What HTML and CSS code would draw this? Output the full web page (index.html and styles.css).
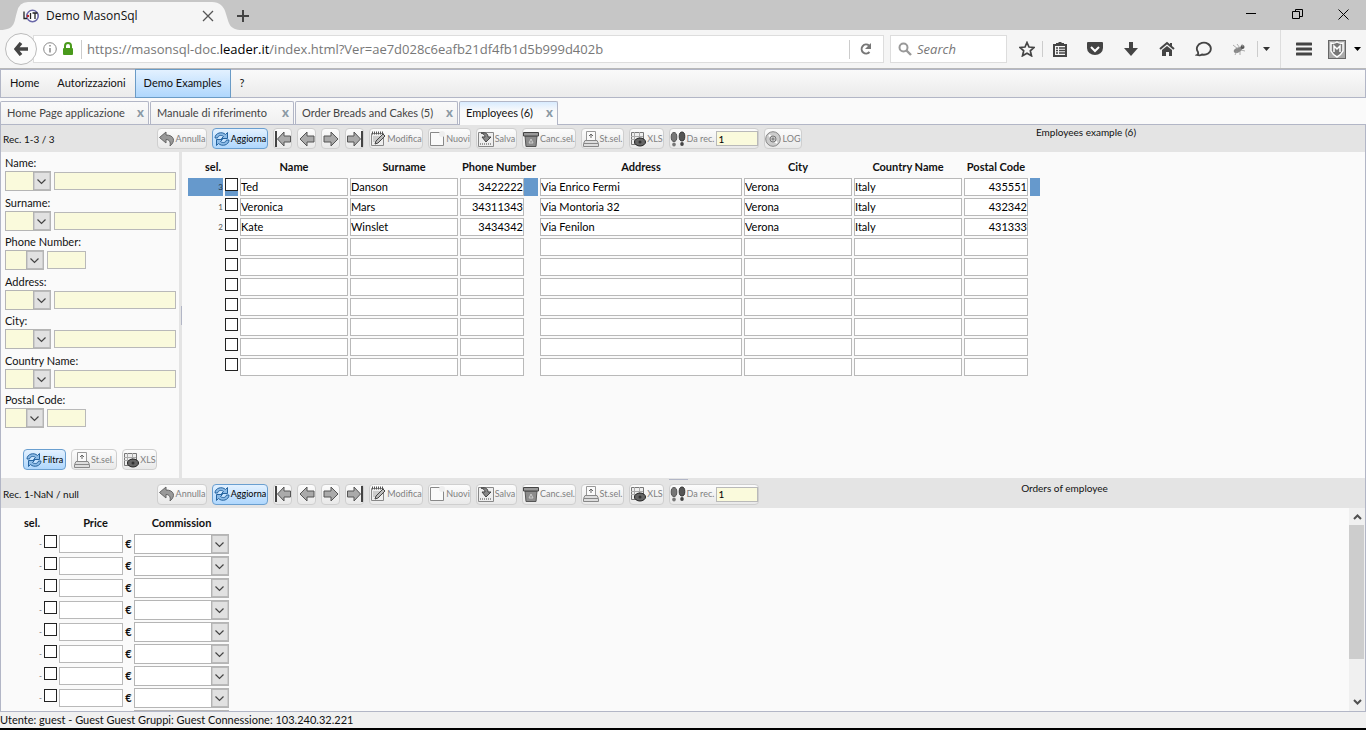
FILE: index.html
```
<!DOCTYPE html>
<html lang="it">
<head>
<meta charset="utf-8">
<title>Demo MasonSql</title>
<link rel="stylesheet" href="styles.css">
</head>
<body>
<svg class="defs" aria-hidden="true">
  <symbol id="undo" viewBox="0 0 16 16"><path d="M7 1 .5 6.500 7 12V8.500c3 0 5 2 4 6.500 6-5 4-11-4-11z" fill="#999" stroke="#666"/></symbol>
  <symbol id="refresh" viewBox="0 0 16 16"><path d="M1 7c0-5 7-7 10.500-3.500L13.500 1.500v6h-6l2-2C7 3.500 4 4.500 3.500 7z" fill="#8dbbe6" stroke="#25639f"/><path d="M15 9c0 5-7 7-10.500 3.500L2.500 14.500v-6h6l-2 2c2.500 2 5.500 1 6-1.500z" fill="#8dbbe6" stroke="#25639f"/></symbol>
  <symbol id="left" viewBox="0 0 16 16"><path d="M1 8 8 1v4h7v6H8v4z" fill="#aaa" stroke="#555"/></symbol>
  <symbol id="right" viewBox="0 0 16 16"><path d="M15 8 8 1v4H1v6h7v4z" fill="#aaa" stroke="#555"/></symbol>
  <symbol id="first" viewBox="0 0 16 16"><path d="M2.500 8 9 1v4h6.500v6H9v4z" fill="#aaa" stroke="#555"/><path d="M1 0v16" stroke="#444" stroke-width="2"/></symbol>
  <symbol id="last" viewBox="0 0 16 16"><path d="M13.500 8 7 1v4H.5v6H7v4z" fill="#aaa" stroke="#555"/><path d="M15 0v16" stroke="#444" stroke-width="2"/></symbol>
  <symbol id="edit" viewBox="0 0 16 16"><path d="M1.500 2.500h12v12h-12z" fill="#eee" stroke="#888"/><path d="M2 2h11" stroke="#555" stroke-width="3" stroke-dasharray="1 1"/><path d="M3 6h7M3 8h6M3 10h4" stroke="#aaa"/><path d="m5 13 1-3 7-7 2 2-7 7z" fill="#bbb" stroke="#444"/></symbol>
  <symbol id="new" viewBox="0 0 16 16"><path d="M1.500 1.500h13v13h-13z" fill="#fafafa" stroke="#888"/><circle cx="13" cy="3" r="3" fill="#eee"/></symbol>
  <symbol id="save" viewBox="0 0 16 16"><path d="M.5 1.500h15v14H.5z" fill="#eee" stroke="#888"/><path d="M2 13h12" stroke="#999" stroke-width="2" stroke-dasharray="1 1"/><path d="M3 2c5-1 7 1 7 4h3l-5 5-4-5h3c0-2-1-3-4-4z" fill="#888" stroke="#444"/></symbol>
  <symbol id="trash" viewBox="0 0 16 16"><path d="M2 5h12l-1 10.500H3z" fill="#8c8c8c" stroke="#555"/><path d="M.5 1.500h15V5H.5z" fill="#999" stroke="#444"/><path d="m6 12 2-4 2 4z" fill="none" stroke="#ccc"/></symbol>
  <symbol id="print" viewBox="0 0 16 16"><path d="M3.500 10V.5h9V10" fill="#fafafa" stroke="#999"/><path d="M8 7V3M6 5l2-2 2 2" fill="none" stroke="#666"/><path d="M2 9.500h12l1.500 3v3H.5v-3z" fill="#ddd" stroke="#888"/><path d="M1 12.500h14" stroke="#888"/></symbol>
  <symbol id="xls" viewBox="0 0 16 16"><path d="M1.500 1.500h12v12h-12z" fill="#eee" stroke="#777"/><path d="M4.500 1v12M9.500 1v9M1 5.500h12M1 8.500h12" stroke="#aaa"/><ellipse cx="10" cy="11" rx="5.500" ry="4" fill="#666" stroke="#222"/><circle cx="10" cy="11" r="1.500" fill="#333"/></symbol>
  <symbol id="steps" viewBox="0 0 16 16"><ellipse cx="4" cy="6" rx="2.800" ry="4.500" fill="#777" stroke="#555"/><ellipse cx="4" cy="13.500" rx="1.800" ry="2" fill="#777"/><ellipse cx="12" cy="5.500" rx="2.800" ry="4.500" fill="#555" stroke="#333"/><ellipse cx="12" cy="13" rx="1.800" ry="2" fill="#444"/></symbol>
  <symbol id="disc" viewBox="0 0 16 16"><circle cx="8" cy="8" r="7.300" fill="#ccc" stroke="#888"/><path d="m4 4 8 8" stroke="#fff" stroke-width="2"/><circle cx="8" cy="8" r="3" fill="#ccc" stroke="#777"/><circle cx="8" cy="8" r="1" fill="#fff" stroke="#666"/></symbol>
</svg>

<header class="browser">
  <div class="titlebar">
    <svg class="tab-shape" viewBox="0 0 242 28" preserveAspectRatio="none"><path d="M0 28C16 28 14 19 17 10Q19 0 28 0H212Q223 0 226 12C229 21 229 28 242 28z" fill="#f5f5f5"/></svg>
    <div class="browser-tab">
      <svg class="favicon" width="16" height="16" viewBox="0 0 16 16"><circle cx="9.500" cy="8" r="5.700" fill="#fff" stroke="#6a68a8" stroke-width="1.600"/><path d="M1 3.500v7h3M7.500 5v6M9.500 5h5M12 5v6" fill="none" stroke="#222" stroke-width="1.300"/><circle cx="5" cy="8" r="1.200" fill="#b22"/></svg>
      <span class="tab-title">Demo MasonSql</span>
      <button class="plain" aria-label="Chiudi scheda"><svg width="12" height="12" viewBox="0 0 12 12"><path d="m1 1 10 10M11 1 1 11" stroke="#555" stroke-width="1.300"/></svg></button>
    </div>
    <button class="plain new-tab" aria-label="Nuova scheda"><svg width="12" height="12" viewBox="0 0 12 12"><path d="M6 0v12M0 6h12" stroke="#444" stroke-width="2"/></svg></button>
    <div class="window-buttons">
      <button class="plain" aria-label="Riduci"><svg width="11" height="11" viewBox="0 0 11 11"><path d="M0 4.500h10" stroke="#000"/></svg></button>
      <button class="plain" aria-label="Ripristina"><svg width="11" height="11" viewBox="0 0 11 11"><path d="M.5 2.500h7v7h-7zM3.500 2V.5h7v7H8" fill="none" stroke="#000"/></svg></button>
      <button class="plain" aria-label="Chiudi"><svg width="11" height="11" viewBox="0 0 11 11"><path d="m.5.5 10 10M10.500.5l-10 10" stroke="#000"/></svg></button>
    </div>
  </div>
  <div class="navbar">
    <button class="plain back" aria-label="Indietro"><svg width="14" height="14" viewBox="0 0 14 14"><path d="M7 1 2 7l5 6M2 7h12" fill="none" stroke="#444" stroke-width="3.400"/></svg></button>
    <div class="urlbar">
      <svg width="14" height="14" viewBox="0 0 14 14"><circle cx="7" cy="7" r="6.300" fill="none" stroke="#888"/><path d="M7 6v4.500M7 3v1.500" stroke="#888" stroke-width="1.500"/></svg>
      <svg width="12" height="14" viewBox="0 0 12 14"><path d="M3 7V4a3 3 0 0 1 6 0v3" fill="none" stroke="#4a9a1c" stroke-width="2"/><rect x="1" y="6" width="10" height="7" rx="1" fill="#4a9a1c"/></svg>
      <span class="rule"></span>
      <span class="url">https://masonsql-doc.<b>leader.it</b>/index.html?Ver=ae7d028c6eafb21df4fb1d5b999d402b</span>
      <span class="rule"></span>
      <button class="plain reload" aria-label="Ricarica"><svg width="12" height="12" viewBox="0 0 12 12"><path d="M9.500 9A4.500 4.500 0 1 1 9 2.500" fill="none" stroke="#777" stroke-width="2"/><path d="M11 0v6H5z" fill="#777"/></svg></button>
    </div>
    <div class="searchbox">
      <svg width="14" height="14" viewBox="0 0 14 14"><circle cx="5.500" cy="5.500" r="4" fill="none" stroke="#999" stroke-width="2"/><path d="m8.500 8.500 4.500 4.500" stroke="#999" stroke-width="2.400"/></svg>
      <input type="text" placeholder="Search" aria-label="Search">
    </div>
    <div class="nav-icons">
      <button class="plain star" aria-label="Segnalibro"><svg width="16" height="16" viewBox="0 0 16 16"><path d="m8 1.500 2 4.500 5 .5-3.700 3.300 1.200 5L8 12.200l-4.500 2.600 1.200-5L1 6.500 6 6z" fill="none" stroke="#444" stroke-width="1.700"/></svg></button>
      <button class="plain list" aria-label="Elenco"><svg width="14" height="16" viewBox="0 0 14 16"><path d="M1 4h12v11H1z" fill="#f5f5f5" stroke="#444" stroke-width="2"/><path d="M3 4V2h2l1-1h2l1 1h2v2z" fill="#444"/><path d="M3 7h2M6 7h6M3 9.500h2M6 9.500h6M3 12h2M6 12h6" stroke="#444" stroke-width="1.300"/></svg></button>
      <button class="plain" aria-label="Pocket"><svg width="16" height="16" viewBox="0 0 16 16"><path d="M1 1h14q1 0 1 1v5a8 7 0 0 1-16 0V2q0-1 1-1z" fill="#444"/><path d="m4 6 4 4 4-4" fill="none" stroke="#fff" stroke-width="2"/></svg></button>
      <button class="plain" aria-label="Download"><svg width="14" height="16" viewBox="0 0 14 16"><path d="M5 1h4v6h5l-7 8-7-8h5z" fill="#444"/></svg></button>
      <button class="plain" aria-label="Home"><svg width="16" height="16" viewBox="0 0 16 16"><path d="m1 8 7-6 7 6" fill="none" stroke="#444" stroke-width="2"/><path d="M3 9l5-4 5 4v6h-3v-4H7v4H3zM11 2h2v4h-2z" fill="#444"/></svg></button>
      <button class="plain" aria-label="Chat"><svg width="17" height="16" viewBox="0 0 17 16"><path d="M2 14c2-1 1-2 1-3a7 6 0 1 1 4 2.500c-1 .8-3 1-5 .5z" fill="none" stroke="#444" stroke-width="1.800"/></svg></button>
      <button class="plain" aria-label="Estensione"><svg width="14" height="14" viewBox="0 0 14 14"><ellipse cx="6" cy="8" rx="4.500" ry="2.400" fill="#888" transform="rotate(-25 6 8)"/><circle cx="10.500" cy="5" r="2" fill="#555"/><path d="m1 3 5 4M5 2l3 4M10 2l1 3M3 13l2-4M8 13V9M13 9 9 8" stroke="#999" stroke-width=".8"/></svg></button>
      <button class="plain drop" aria-label="Altro"><svg width="7" height="4" viewBox="0 0 7 4"><path d="M0 0h7L3.500 4z" fill="#333"/></svg></button>
      <button class="plain menu" aria-label="Menu"><svg width="16" height="14" viewBox="0 0 16 14"><path d="M1 2h14M1 7h14M1 12h14" stroke="#444" stroke-width="3" stroke-linecap="round"/></svg></button>
      <button class="plain shield" aria-label="Sicurezza"><svg width="18" height="19" viewBox="0 0 18 19"><rect x=".5" y=".5" width="17" height="18" fill="#aaa" stroke="#666"/><path d="M3 3q3 1 6-1 3 2 6 1v8q-2 4-6 6-4-2-6-6z" fill="#777" stroke="#fff" stroke-width="1.500"/><path d="M6 12V6l3 3 3-3v6" fill="none" stroke="#fff" stroke-width="1.500"/></svg></button>
      <button class="plain last" aria-label="Opzioni"><svg width="7" height="4" viewBox="0 0 7 4"><path d="M0 0h7L3.500 4z" fill="#000"/></svg></button>
    </div>
  </div>
</header>

<nav class="menubar">
  <a href="#">Home</a><a href="#">Autorizzazioni</a><a href="#" class="active">Demo Examples</a><a href="#">?</a>
</nav>
<div class="tabs">
  <div class="tab tab-home"><a href="#">Home Page applicazione</a><button class="plain">x</button></div>
  <div class="tab tab-manual"><a href="#">Manuale di riferimento</a><button class="plain">x</button></div>
  <div class="tab tab-orders"><a href="#">Order Breads and Cakes (5)</a><button class="plain">x</button></div>
  <div class="tab tab-employees active"><a href="#">Employees (6)</a><button class="plain">x</button></div>
</div>

<main class="workspace">
  <div class="toolbar" id="toolbar-top"><span class="record">Rec. 1-3 / 3</span><span class="caption">Employees example (6)</span></div>
  <div class="split">
    <form class="filters">
      <div class="fields" id="fields"></div>
      <div class="filter-buttons">
        <button type="button" class="tool primary w-filter"><svg><use href="#refresh"/></svg>Filtra</button>
        <button type="button" class="tool w-find"><svg><use href="#print"/></svg>St.sel.</button>
        <button type="button" class="tool w-xls"><svg><use href="#xls"/></svg>XLS</button>
      </div>
    </form>
    <div class="splitter"><span></span></div>
    <div class="records">
      <table class="employees">
        <thead><tr><th class="c-num"><span>sel.</span></th><th class="c-check"></th><th class="c-mid">Name</th><th class="c-mid">Surname</th><th class="c-phone">Phone Number</th><th class="c-address">Address</th><th class="c-mid">City</th><th class="c-mid">Country Name</th><th class="c-code">Postal Code</th><th class="c-end"></th></tr></thead>
        <tbody id="employees"></tbody>
      </table>
    </div>
  </div>
  <div class="toolbar second" id="toolbar-bottom"><span class="record">Rec. 1-NaN / null</span><span class="caption">Orders of employee</span></div>
  <div class="orders-pane">
    <table class="orders">
      <thead><tr><th class="o-num"><span>sel.</span></th><th class="c-check"></th><th class="o-price"><span>Price</span></th><th class="o-euro"></th><th class="o-commission">Commission</th></tr></thead>
      <tbody id="orders"></tbody>
    </table>
    <div class="scrollbar">
      <svg width="9" height="6" viewBox="0 0 9 6"><path d="m1 5 3.500-3.500L8 5" fill="none" stroke="#505050" stroke-width="2"/></svg>
      <div class="track"><div class="thumb"></div></div>
      <svg width="9" height="6" viewBox="0 0 9 6"><path d="m1 1 3.500 3.500L8 1" fill="none" stroke="#505050" stroke-width="2"/></svg>
    </div>
  </div>
</main>
<footer class="status">Utente: guest - Guest Guest Gruppi: Guest Connessione: 103.240.32.221</footer>
<div class="taskbar"></div>
<script src="app.js"></script>
</body>
</html>
```
FILE: styles.css
```
* { box-sizing: border-box; }
body {
  margin: 0;
  height: 100vh;
  display: flex;
  flex-direction: column;
  overflow: hidden;
  background: #fafafa;
  color: #111;
  font: 11px/14px Lato, "Open Sans", sans-serif;
}
button, input, select { font: inherit; color: inherit; margin: 0; }
a { color: inherit; text-decoration: none; }
svg { display: block; flex: none; }
.defs { width: 0; height: 0; position: absolute; }
.plain { border: 0; padding: 0; background: none; display: flex; align-items: center; justify-content: center; }

/* Browser chrome */
.browser { flex: none; font-family: "Open Sans", sans-serif; }
.titlebar { height: 30px; background: #c6c6c6; display: flex; align-items: center; position: relative; }
.tab-shape { position: absolute; left: 0; bottom: 0; width: 242px; height: 28px; }
.browser-tab { position: relative; width: 214px; padding: 2px 0 0 23px; display: flex; align-items: center; gap: 7px; font-size: 12px; }
.tab-title { flex: 1; }
.new-tab { margin: 2px 0 0 23px; }
.window-buttons { margin-left: auto; display: flex; gap: 35px; padding: 0 17px 2px 0; }
.navbar { height: 39px; background: #f5f5f5; border-bottom: 1px solid #b9b9b9; display: flex; align-items: center; }
.back { width: 32px; height: 32px; margin-left: 5px; border: 1px solid #bbb; border-radius: 50%; background: #fbfbfb; z-index: 1; flex: none; }
.urlbar { flex: 1; height: 28px; margin-left: -4px; padding: 0 11px 0 9px; display: flex; align-items: center; gap: 5px; background: #fff; border: 1px solid #ddd; color: #777; min-width: 0; }
.url { flex: 1; white-space: nowrap; font-size: 13px; }
.url b { font-weight: 400; color: #000; }
.rule { width: 1px; height: 19px; background: #ccc; margin-left: 2px; }
.reload { margin-left: 5px; }
.searchbox { width: 117px; height: 28px; margin-left: 6px; padding-left: 7px; border: 1px solid #ddd; background: #fff; display: flex; align-items: center; gap: 5px; }
.searchbox input { width: 80px; border: 0; padding: 0; font-size: 13px; font-style: italic; outline: 0; }
.searchbox input::placeholder { color: #777; }
.nav-icons { height: 38px; padding-left: 5px; display: flex; align-items: center; }
.nav-icons .plain { width: 36px; height: 16px; }
.nav-icons .star { width: 31px; border-right: 1px solid #ccc; }
.nav-icons .list { width: 34px; }
.nav-icons .drop { width: 23px; padding-right: 6px; border-left: 1px solid #ccc; }
.nav-icons .menu { width: 46px; height: 38px; border-left: 1px solid #ddd; }
.nav-icons .shield { width: 22px; height: 20px; }
.nav-icons .last { width: 18px; }

/* Application menu and tabs */
.menubar { flex: none; height: 29px; display: flex; border: 1px solid #b2b6c6; background: linear-gradient(#fafafa, #ebebeb); }
.menubar a { display: flex; align-items: center; padding: 0 8px 2px; border: 1px solid transparent; }
.menubar .active { margin: -1px 0; border-color: #6a9bc6; background: linear-gradient(#e3f1ff, #afd7fd); }
.tabs { flex: none; height: 27px; padding-top: 3px; display: flex; gap: 1px; border-bottom: 1px solid #b2b6c6; }
.tab { display: flex; align-items: center; justify-content: space-between; height: 23px; padding: 0 4px 0 6px; border: 1px solid #b2b6c6; border-bottom: 0; border-radius: 2px 2px 0 0; background: linear-gradient(#fafafa, #f0f0f0); color: #444; }
.tab .plain { color: #8b99a5; font-weight: 900; font-size: 13px; line-height: 14px; padding-bottom: 2px; }
.tab.active { height: 24px; padding-bottom: 1px; background: linear-gradient(#d9ecff, #fafafa 40%); color: #111; }
.tab-home { width: 149px; }
.tab-manual { width: 144px; }
.tab-orders { width: 163px; }
.tab-employees { width: 99px; }

/* Toolbars */
.workspace { flex: 1; min-height: 0; display: flex; flex-direction: column; border: 1px solid #b2b6c6; border-top: 0; }
.toolbar { flex: none; height: 27px; background: #e4e4e4; display: flex; align-items: center; gap: 5px; }
.toolbar.second { height: 30px; padding-top: 2px; position: relative; }
.toolbar.second::before { content: ""; position: absolute; left: 668px; top: 1px; width: 19px; height: 1px; background: #b2b6c6; }
.record { width: 151px; padding-left: 2px; font-size: 10px; }
.caption { flex: 1; align-self: flex-start; text-align: center; font-size: 10px; }
.second .caption { padding-top: 1px; }
.tool { flex: none; height: 21px; padding: 0; display: flex; align-items: center; justify-content: center; gap: 1px; border: 1px solid #cfcfcf; border-radius: 4px; background: linear-gradient(#fcfcfc, #e9e9e9); color: #808080; font-size: 9px; white-space: nowrap; }
.tool svg { width: 16px; height: 16px; }
.tool.primary { border-color: #6a9fd0; background: linear-gradient(#e3f1ff, #afd7fd); color: #000; }
.tool input { width: 42px; height: 15px; padding: 0 1px; border: 1px solid #b9b9b9; background: #fafadc; color: #000; font-size: 10px; margin-left: 1px; }
.w-undo { width: 50px; }
.w-refresh { width: 56px; }
.w-arrow { width: 19px; }
.w-edit, .w-trash { width: 54px; }
.w-new { width: 43px; }
.w-save { width: 41px; }
.w-print { width: 43px; }
.w-find { width: 46px; }
.w-xls { width: 35px; }
.w-goto { width: 90px; }
.w-log { width: 38px; }
.w-filter { width: 43px; }

/* Filters */
.split { flex: none; height: 326px; display: flex; }
.filters { width: 178px; padding: 4px 0 0 4px; }
.fields { height: 272px; display: flex; flex-direction: column; justify-content: space-between; }
.field { height: 35px; }
.field label { display: block; height: 15px; }
.field-row { display: flex; align-items: center; gap: 3px; }
select {
  appearance: none;
  display: block;
  height: 20px;
  padding: 0 18px 0 2px;
  border: 1px solid #b5b5b5;
  border-radius: 0;
  background: #fff url("data:image/svg+xml,%3Csvg xmlns='http://www.w3.org/2000/svg' width='18' height='20'%3E%3Crect x='.5' y='.5' width='17' height='19' fill='%23e1e1e1' stroke='%23adadad'/%3E%3Cpath d='M1 1.500h16v17H1z' fill='none' stroke='%23b9b9b9'/%3E%3Cpath d='m4.500 8.500 4 4 4-4' fill='none' stroke='%23444' stroke-width='1.200'/%3E%3C/svg%3E") no-repeat right center;
  background-origin: border-box;
}
.field select { width: 46px; background-color: #fafadc; }
.field input { width: 122px; height: 18px; padding: 0 1px; border: 1px solid #b9b9b9; background: #fafadc; }
.field.short select, .field.short input { width: 39px; }
.filter-buttons { display: flex; gap: 5px; padding: 21px 0 0 18px; }
.splitter { width: 3px; background: #e4e4e4; display: flex; align-items: center; justify-content: flex-end; }
.splitter span { width: 1px; height: 19px; background: #b2b6c6; }

/* Record grids */
table { table-layout: fixed; border-spacing: 2px; }
th, td { padding: 0; vertical-align: top; }
th { vertical-align: bottom; white-space: nowrap; }
.records { padding: 2px 0 0 4px; }
.employees { width: 856px; }
.employees th { height: 20px; padding-bottom: 2px; }
.employees td { height: 18px; }
.employees input[type="text"], .orders input[type="text"] { display: block; width: 100%; height: 18px; padding: 0 0 1px; border: 1px solid #b9b9b9; background: #fff; color: #000; }
.employees .number input[type="text"] { width: 64px; text-align: right; }
.rownum { text-align: right; font-size: 8px; line-height: 18px; color: #555; }
.selected .rownum, .selected .check, .selected .phone, .selected .end { background: #6699cc; }
.selected .rownum { color: #234; }
input[type="checkbox"] { appearance: none; display: block; width: 13px; height: 13px; border: 1px solid #222; background: #fff; }
.c-num { width: 35px; }
.c-num span { padding-left: 15px; }
.c-check { width: 13px; }
.c-mid { width: 108px; }
.c-phone { width: 78px; }
.c-address { width: 202px; }
.c-code { width: 64px; }
.c-end { width: 10px; }

.orders-pane { flex: 1; min-height: 0; overflow: hidden; display: flex; justify-content: space-between; align-items: flex-start; }
.orders { width: 228px; margin-top: 4px; }
.orders th { height: 18px; padding-bottom: 2px; }
.orders td { height: 20px; }
.orders .rownum { line-height: 20px; }
.orders input[type="checkbox"], .orders input[type="text"] { margin-top: 1px; }
.orders select { width: 100%; }
.euro { text-align: center; line-height: 20px; font-weight: 700; }
.o-num { width: 39px; }
.o-num span { padding-left: 19px; }
.o-price { width: 64px; }
.o-price span { padding-left: 9px; }
.o-euro { width: 7px; }
.o-commission { width: 95px; }
.scrollbar { align-self: stretch; width: 16px; padding: 6px 0; display: flex; flex-direction: column; align-items: center; background: #f0f0f0; }
.track { flex: 1; width: 100%; padding: 5px 1px 0 0; }
.thumb { height: 77%; background: #cdcdcd; }
.status { flex: none; height: 16px; line-height: 16px; background: #f0f0f0; white-space: nowrap; }
.taskbar { flex: none; height: 2px; background: #000; }
```
FILE: app.js
```
const tools = [
  ["undo", "Annulla", "w-undo"], ["refresh", "Aggiorna", "w-refresh primary"],
  ["first", "", "w-arrow"], ["left", "", "w-arrow"], ["right", "", "w-arrow"], ["last", "", "w-arrow"],
  ["edit", "Modifica", "w-edit"], ["new", "Nuovi", "w-new"], ["save", "Salva", "w-save"],
  ["trash", "Canc.sel.", "w-trash"], ["print", "St.sel.", "w-print"], ["xls", "XLS", "w-xls"]
];
const toolButton = ([icon, text, cls]) =>
  `<button type="button" class="tool ${cls}" aria-label="${text || icon}"><svg><use href="#${icon}"/></svg>${text}</button>`;

function fillToolbar(id, withLog) {
  const bar = document.getElementById(id);
  const go = `<label class="tool w-goto"><svg><use href="#steps"/></svg>Da rec.<input type="text" value="1"></label>`;
  bar.querySelector(".record").insertAdjacentHTML("afterend",
    tools.map(toolButton).join("") + go + (withLog ? toolButton(["disc", "LOG", "w-log"]) : ""));
}
fillToolbar("toolbar-top", true);
fillToolbar("toolbar-bottom", false);

const fields = ["Name", "Surname", "Phone Number", "Address", "City", "Country Name", "Postal Code"];
document.getElementById("fields").innerHTML = fields.map((name, i) => {
  const short = name === "Phone Number" || name === "Postal Code" ? " short" : "";
  return `<div class="field${short}"><label for="f${i}">${name}:</label><div class="field-row">` +
    `<select aria-label="${name}"><option></option></select><input type="text" id="f${i}"></div></div>`;
}).join("");

const columns = ["Name", "Surname", "Phone Number", "Address", "City", "Country Name", "Postal Code"];
const people = [
  ["3", "Ted", "Danson", "3422222", "Via Enrico Fermi", "Verona", "Italy", "435551"],
  ["1", "Veronica", "Mars", "34311343", "Via Montoria 32", "Verona", "Italy", "432342"],
  ["2", "Kate", "Winslet", "3434342", "Via Fenilon", "Verona", "Italy", "431333"]
];
let rows = "";
for (let r = 0; r < 10; r++) {
  const person = people[r] || Array(8).fill("");
  rows += `<tr class="${r === 0 ? "selected" : ""}"><td class="rownum">${person[0]}</td>` +
    `<td class="check"><input type="checkbox" aria-label="sel."></td>` +
    person.slice(1).map((value, c) =>
      `<td class="${c === 2 ? "number phone" : c === 6 ? "number" : ""}"><input type="text" aria-label="${columns[c]}" value="${value}"></td>`
    ).join("") + `<td class="end"></td></tr>`;
}
document.getElementById("employees").innerHTML = rows;

const orderRow = (mark, currency) =>
  `<tr><td class="rownum">${mark}</td><td><input type="checkbox" aria-label="sel."></td>` +
  `<td><input type="text" aria-label="Price"></td><td class="euro">${currency}</td>` +
  `<td><select aria-label="Commission"><option></option></select></td></tr>`;
document.getElementById("orders").innerHTML = orderRow("-", "€").repeat(8) + orderRow("", "");
```
